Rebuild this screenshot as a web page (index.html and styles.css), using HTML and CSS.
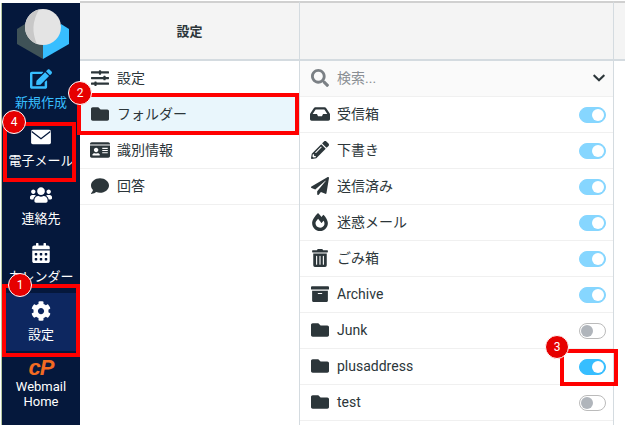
FILE: index.html
```html
<!DOCTYPE html>
<html lang="ja">
<head>
<meta charset="utf-8">
<title>設定</title>
<link rel="stylesheet" href="styles.css">
</head>
<body>
<svg class="sprite" aria-hidden="true">
  <symbol id="i-folder" viewBox="0 0 512 512"><path d="M464 128H272l-64-64H48C21.49 64 0 85.49 0 112v288c0 26.51 21.49 48 48 48h416c26.51 0 48-21.49 48-48V176c0-26.51-21.49-48-48-48z"/></symbol>
  <symbol id="i-cog" viewBox="0 0 512 512"><path d="M487.4 315.7l-42.6-24.6c4.3-23.2 4.3-47 0-70.2l42.6-24.6c4.9-2.8 7.1-8.6 5.5-14-11.1-35.6-30-67.8-54.7-94.6-3.8-4.1-10-5.1-14.8-2.3L380.8 110c-17.9-15.4-38.5-27.3-60.8-35.1V25.8c0-5.6-3.9-10.5-9.4-11.7-36.7-8.2-74.3-7.8-109.2 0-5.5 1.2-9.4 6.1-9.4 11.7V75c-22.2 7.9-42.8 19.8-60.8 35.1L88.7 85.5c-4.9-2.8-11-1.9-14.8 2.3-24.7 26.7-43.6 58.9-54.7 94.6-1.7 5.4.6 11.2 5.5 14L67.3 221c-4.3 23.2-4.3 47 0 70.2l-42.6 24.6c-4.9 2.8-7.1 8.6-5.5 14 11.1 35.6 30 67.8 54.7 94.6 3.8 4.1 10 5.1 14.8 2.3l42.6-24.6c17.9 15.4 38.5 27.3 60.8 35.1v49.2c0 5.6 3.9 10.5 9.4 11.7 36.7 8.2 74.3 7.8 109.2 0 5.5-1.2 9.4-6.1 9.4-11.7v-49.2c22.2-7.9 42.8-19.8 60.8-35.1l42.6 24.6c4.9 2.8 11 1.9 14.8-2.3 24.7-26.7 43.6-58.9 54.7-94.6 1.5-5.5-.7-11.3-5.6-14.1zM256 336c-44.1 0-80-35.9-80-80s35.9-80 80-80 80 35.9 80 80-35.9 80-80 80z"/></symbol>
</svg>

<div class="app">
  <nav class="sidebar">
    <div class="logo">
      <svg viewBox="0 0 52 52" width="52" height="52">
        <path class="logo-left" d="M0 21 L8 16 L26 35 L26 51 L0 36 Z"/>
        <path class="logo-right" d="M52 21 L44 16 L26 35 L26 51 L52 36 Z"/>
        <circle class="logo-ball" cx="26" cy="19" r="18"/>
        <path class="logo-shade" d="M22 1.5 A18 18 0 0 0 20 36 Q12 19 22 1.5 Z"/>
      </svg>
    </div>
    <a class="nav-item nav-compose">
      <svg class="nav-icon" viewBox="0 0 576 512"><path d="M402.6 83.2l90.2 90.2c3.8 3.8 3.8 10 0 13.8L274.4 405.6l-92.8 10.3c-12.4 1.4-22.9-9.1-21.5-21.5l10.3-92.8L388.8 83.2c3.8-3.8 10-3.8 13.8 0zm162-22.9l-48.8-48.8c-15.2-15.2-39.9-15.2-55.2 0l-35.4 35.4c-3.8 3.8-3.8 10 0 13.8l90.2 90.2c3.8 3.8 10 3.8 13.8 0l35.4-35.4c15.2-15.3 15.2-40 0-55.2zM384 346.2V448H64V128h229.8c3.2 0 6.2-1.3 8.5-3.5l40-40c7.6-7.6 2.2-20.5-8.5-20.5H48C21.5 64 0 85.5 0 112v352c0 26.5 21.5 48 48 48h352c26.5 0 48-21.5 48-48V306.2c0-10.7-12.9-16-20.5-8.5l-40 40c-2.2 2.3-3.5 5.3-3.5 8.5z"/></svg>
      <span>新規作成</span>
    </a>
    <a class="nav-item">
      <svg class="nav-icon" viewBox="0 0 20 16"><rect class="env-body" x="1" y="1.5" width="18" height="13" rx="1.5"/><path class="env-line" d="M1.5 3 L10 9.5 L18.5 3"/></svg>
      <span>電子メール</span>
    </a>
    <a class="nav-item">
      <svg class="nav-icon" viewBox="0 0 640 512"><path d="M96 224c35.3 0 64-28.7 64-64s-28.7-64-64-64-64 28.7-64 64 28.7 64 64 64zm448 0c35.3 0 64-28.7 64-64s-28.7-64-64-64-64 28.7-64 64 28.7 64 64 64zm32 32h-64c-17.6 0-33.5 7.1-45.1 18.6 40.3 22.1 68.9 62 75.1 109.4h66c17.7 0 32-14.3 32-32v-32c0-35.3-28.7-64-64-64zm-256 0c61.9 0 112-50.1 112-112S381.9 32 320 32 208 82.1 208 144s50.1 112 112 112zm76.8 32h-8.3c-20.8 10-43.9 16-68.5 16s-47.6-6-68.5-16h-8.3C179.6 288 128 339.6 128 403.2V432c0 26.5 21.5 48 48 48h288c26.5 0 48-21.5 48-48v-28.8c0-63.6-51.6-115.2-115.2-115.2zm-223.7-13.4C161.5 263.1 145.6 256 128 256H64c-35.3 0-64 28.7-64 64v32c0 17.7 14.3 32 32 32h65.9c6.3-47.4 34.9-87.3 75.2-109.4z"/></svg>
      <span>連絡先</span>
    </a>
    <a class="nav-item">
      <svg class="nav-icon" viewBox="0 0 448 512"><path d="M0 464c0 26.5 21.5 48 48 48h352c26.5 0 48-21.5 48-48V192H0v272zm320-196c0-6.6 5.4-12 12-12h40c6.6 0 12 5.4 12 12v40c0 6.6-5.4 12-12 12h-40c-6.6 0-12-5.4-12-12v-40zm0 128c0-6.6 5.4-12 12-12h40c6.6 0 12 5.4 12 12v40c0 6.6-5.4 12-12 12h-40c-6.6 0-12-5.4-12-12v-40zM192 268c0-6.6 5.4-12 12-12h40c6.6 0 12 5.4 12 12v40c0 6.6-5.4 12-12 12h-40c-6.6 0-12-5.4-12-12v-40zm0 128c0-6.6 5.4-12 12-12h40c6.6 0 12 5.4 12 12v40c0 6.6-5.4 12-12 12h-40c-6.6 0-12-5.4-12-12v-40zM64 268c0-6.6 5.4-12 12-12h40c6.6 0 12 5.4 12 12v40c0 6.6-5.4 12-12 12H76c-6.6 0-12-5.4-12-12v-40zm0 128c0-6.6 5.4-12 12-12h40c6.6 0 12 5.4 12 12v40c0 6.6-5.4 12-12 12H76c-6.6 0-12-5.4-12-12v-40zM400 64h-48V16c0-8.8-7.2-16-16-16h-32c-8.8 0-16 7.2-16 16v48H160V16c0-8.8-7.2-16-16-16h-32c-8.8 0-16 7.2-16 16v48H48C21.5 64 0 85.5 0 112v48h448v-48c0-26.5-21.5-48-48-48z"/></svg>
      <span>カレンダー</span>
    </a>
    <a class="nav-item nav-active">
      <svg class="nav-icon"><use href="#i-cog"/></svg>
      <span>設定</span>
    </a>
    <a class="nav-item nav-cpanel">
      <span class="cp-logo">cP</span>
      <span>Webmail<br>Home</span>
    </a>
  </nav>

  <section class="col col-menu">
    <header class="col-head">設定</header>
    <ul class="rows">
      <li class="row">
        <svg class="ico" viewBox="0 0 512 512"><path d="M496 384H160v-16c0-8.8-7.2-16-16-16h-32c-8.8 0-16 7.2-16 16v16H16c-8.8 0-16 7.2-16 16v32c0 8.8 7.2 16 16 16h80v16c0 8.8 7.2 16 16 16h32c8.8 0 16-7.2 16-16v-16h336c8.8 0 16-7.2 16-16v-32c0-8.8-7.2-16-16-16zm0-160h-80v-16c0-8.8-7.2-16-16-16h-32c-8.8 0-16 7.2-16 16v16H16c-8.8 0-16 7.2-16 16v32c0 8.8 7.2 16 16 16h336v16c0 8.8 7.2 16 16 16h32c8.8 0 16-7.2 16-16v-16h80c8.8 0 16-7.2 16-16v-32c0-8.8-7.2-16-16-16zm0-160H288V48c0-8.8-7.2-16-16-16h-32c-8.8 0-16 7.2-16 16v16H16C7.2 64 0 71.2 0 80v32c0 8.8 7.2 16 16 16h208v16c0 8.8 7.2 16 16 16h32c8.8 0 16-7.2 16-16v-16h208c8.8 0 16-7.2 16-16V80c0-8.8-7.2-16-16-16z"/></svg>
        <span class="ja">設定</span>
      </li>
      <li class="row row-selected">
        <svg class="ico"><use href="#i-folder"/></svg>
        <span class="ja">フォルダー</span>
      </li>
      <li class="row">
        <svg class="ico" viewBox="0 0 576 512"><path d="M528 32H48C21.5 32 0 53.5 0 80v16h576V80c0-26.5-21.5-48-48-48zM0 432c0 26.5 21.5 48 48 48h480c26.5 0 48-21.5 48-48V128H0v304zm352-232c0-4.4 3.6-8 8-8h144c4.4 0 8 3.6 8 8v16c0 4.4-3.6 8-8 8H360c-4.4 0-8-3.6-8-8v-16zm0 64c0-4.4 3.6-8 8-8h144c4.4 0 8 3.6 8 8v16c0 4.4-3.6 8-8 8H360c-4.4 0-8-3.6-8-8v-16zm0 64c0-4.4 3.6-8 8-8h144c4.4 0 8 3.6 8 8v16c0 4.4-3.6 8-8 8H360c-4.4 0-8-3.6-8-8v-16zM176 192c35.3 0 64 28.7 64 64s-28.7 64-64 64-64-28.7-64-64 28.7-64 64-64zM67.1 396.2C75.5 370.5 99.6 352 128 352h8.2c12.3 5.1 25.7 8 39.8 8s27.6-2.9 39.8-8h8.2c28.4 0 52.5 18.5 60.9 44.2 3.2 9.9-5.2 19.8-15.6 19.8H82.7c-10.4 0-18.8-10-15.6-19.8z"/></svg>
        <span class="ja">識別情報</span>
      </li>
      <li class="row">
        <svg class="ico" viewBox="0 0 512 512"><path d="M256 32C114.6 32 0 125.1 0 240c0 49.6 21.4 95 57 130.7C44.5 421.1 2.7 466 2.2 466.5c-2.2 2.3-2.8 5.7-1.5 8.7S4.8 480 8 480c66.3 0 116-31.8 140.6-51.4 32.7 12.3 69 19.4 107.4 19.4 141.4 0 256-93.1 256-208S397.4 32 256 32z"/></svg>
        <span class="ja">回答</span>
      </li>
    </ul>
  </section>

  <section class="col col-folders">
    <header class="col-head"></header>
    <div class="row search-row">
      <svg class="ico ico-search" viewBox="0 0 512 512"><path d="M505 442.7L405.3 343c-4.5-4.5-10.6-7-17-7H372c27.6-35.3 44-79.7 44-128C416 93.1 322.9 0 208 0S0 93.1 0 208s93.1 208 208 208c48.3 0 92.7-16.4 128-44v16.3c0 6.4 2.5 12.5 7 17l99.7 99.7c9.4 9.4 24.6 9.4 33.9 0l28.3-28.3c9.4-9.4 9.4-24.6.1-34zM208 336c-70.7 0-128-57.2-128-128 0-70.7 57.2-128 128-128 70.7 0 128 57.2 128 128 0 70.7-57.2 128-128 128z"/></svg>
      <span class="search-text ja">検索...</span>
      <svg class="chevron" viewBox="0 0 448 512"><path d="M207.029 381.476L12.686 187.132c-9.373-9.373-9.373-24.569 0-33.941l22.667-22.667c9.357-9.357 24.522-9.375 33.901-.04L224 284.505l154.745-154.021c9.379-9.335 24.544-9.317 33.901.04l22.667 22.667c9.373 9.373 9.373 24.569 0 33.941L240.971 381.476c-9.373 9.372-24.569 9.372-33.942 0z"/></svg>
    </div>
    <ul class="rows">
      <li class="row">
        <svg class="ico" viewBox="0 0 576 512"><path d="M567.938 243.908L462.25 85.374A48.003 48.003 0 0 0 422.311 64H153.689a48 48 0 0 0-39.938 21.374L8.062 243.908A47.994 47.994 0 0 0 0 270.533V400c0 26.51 21.49 48 48 48h480c26.51 0 48-21.49 48-48V270.533a47.994 47.994 0 0 0-8.062-26.625zM162.252 128h251.497l85.333 128H376l-32 64H232l-32-64H76.918l85.334-128z"/></svg>
        <span class="grow ja">受信箱</span><i class="toggle toggle-faded"></i>
      </li>
      <li class="row">
        <svg class="ico" viewBox="0 0 512 512"><path d="M497.9 142.1l-46.1 46.1c-4.7 4.7-12.3 4.7-17 0l-111-111c-4.7-4.7-4.7-12.3 0-17l46.1-46.1c18.7-18.7 49.1-18.7 67.9 0l60.1 60.1c18.8 18.7 18.8 49.1 0 67.9zM284.2 99.8L21.6 362.4.4 483.9c-2.9 16.4 11.4 30.6 27.8 27.8l121.5-21.3 262.6-262.6c4.7-4.7 4.7-12.3 0-17l-111-111c-4.8-4.7-12.4-4.7-17.1 0zM124.1 339.9c-5.5-5.5-5.5-14.3 0-19.8l154-154c5.5-5.5 14.3-5.5 19.8 0s5.5 14.3 0 19.8l-154 154c-5.5 5.5-14.3 5.5-19.8 0zM88 424h48v36.3l-64.5 11.3-31.1-31.1L51.7 376H88v48z"/></svg>
        <span class="grow ja">下書き</span><i class="toggle toggle-faded"></i>
      </li>
      <li class="row">
        <svg class="ico" viewBox="0 0 512 512"><path d="M476 3.2L12.5 270.6c-18.1 10.4-15.8 35.6 2.2 43.2L121 358.4l287.3-253.2c5.5-4.9 13.3 2.6 8.6 8.3L176 407v80.5c0 23.6 28.5 32.9 42.5 15.8L282 426l124.6 52.2c14.2 6 30.4-2.9 33-18.2l72-432C515 7.8 493.3-6.8 476 3.2z"/></svg>
        <span class="grow ja">送信済み</span><i class="toggle toggle-faded"></i>
      </li>
      <li class="row">
        <svg class="ico" viewBox="0 0 448 512"><path d="M323.56 51.2c-20.8 19.3-39.58 39.59-56.22 59.97C240.08 73.62 206.28 35.53 168 0 69.74 91.17 0 209.96 0 281.6 0 408.85 100.29 512 224 512s224-103.15 224-230.4c0-53.27-51.98-163.14-124.44-230.4zm-19.47 340.65C282.43 407.01 255.72 416 226.86 416 154.71 416 96 368.26 96 290.75c0-38.61 24.31-72.63 72.79-130.75 6.93 7.98 98.83 125.34 98.83 125.34l58.63-66.88c4.14 6.85 7.91 13.55 11.27 19.97 27.35 52.19 15.81 118.97-33.43 153.42z"/></svg>
        <span class="grow ja">迷惑メール</span><i class="toggle toggle-faded"></i>
      </li>
      <li class="row">
        <svg class="ico" viewBox="0 0 448 512"><path d="M32 464a48 48 0 0 0 48 48h288a48 48 0 0 0 48-48V128H32zm272-256a16 16 0 0 1 32 0v224a16 16 0 0 1-32 0zm-96 0a16 16 0 0 1 32 0v224a16 16 0 0 1-32 0zm-96 0a16 16 0 0 1 32 0v224a16 16 0 0 1-32 0zM432 32H312l-9.4-18.7A24 24 0 0 0 281.1 0H166.8a23.72 23.72 0 0 0-21.4 13.3L136 32H16A16 16 0 0 0 0 48v32a16 16 0 0 0 16 16h416a16 16 0 0 0 16-16V48a16 16 0 0 0-16-16z"/></svg>
        <span class="grow ja">ごみ箱</span><i class="toggle toggle-faded"></i>
      </li>
      <li class="row">
        <svg class="ico" viewBox="0 0 512 512"><path d="M32 448c0 17.7 14.3 32 32 32h384c17.7 0 32-14.3 32-32V160H32v288zm160-212c0-6.6 5.4-12 12-12h104c6.6 0 12 5.4 12 12v8c0 6.6-5.4 12-12 12H204c-6.6 0-12-5.4-12-12v-8zM480 32H32C14.3 32 0 46.3 0 64v48c0 8.8 7.2 16 16 16h480c8.8 0 16-7.2 16-16V64c0-17.7-14.3-32-32-32z"/></svg>
        <span class="grow">Archive</span><i class="toggle toggle-faded"></i>
      </li>
      <li class="row">
        <svg class="ico"><use href="#i-folder"/></svg>
        <span class="grow">Junk</span><i class="toggle toggle-off"></i>
      </li>
      <li class="row">
        <svg class="ico"><use href="#i-folder"/></svg>
        <span class="grow">plusaddress</span><i class="toggle toggle-on"></i>
      </li>
      <li class="row">
        <svg class="ico"><use href="#i-folder"/></svg>
        <span class="grow">test</span><i class="toggle toggle-off"></i>
      </li>
    </ul>
  </section>

  <section class="col col-rest">
    <header class="col-head"></header>
  </section>

  <div class="mark mark-settings"></div>
  <div class="mark mark-mail"></div>
  <div class="mark mark-folder"></div>
  <div class="mark mark-toggle"></div>
  <b class="badge badge-1">1</b>
  <b class="badge badge-2">2</b>
  <b class="badge badge-3">3</b>
  <b class="badge badge-4">4</b>
</div>
</body>
</html>
```
FILE: styles.css
```css
* { box-sizing: border-box; }
html, body { margin: 0; height: 100%; overflow: hidden; background: #fff; }
body { font-family: Roboto, "Noto Sans CJK JP", sans-serif; color: #2c363a; }
.sprite { display: none; }
ul { list-style: none; margin: 0; padding: 0; }

.app { position: relative; display: flex; width: 625px; height: 425px; overflow: hidden; }

.sidebar {
  width: 79px; margin: 3px 0 0 1px; flex: none;
  background: #05183c; border-left: 1px solid #b5c7a0;
  color: #fff; display: flex; flex-direction: column; align-items: stretch;
}
.logo { height: 58px; display: flex; padding: 5px 0 0 15px; }
.logo-left { fill: #3f5257; }
.logo-right { fill: #37beff; }
.logo-ball { fill: #e4e4e4; }
.logo-shade { fill: #c8c8c8; }

.nav-item {
  height: 58px; flex: none; display: flex; flex-direction: column; align-items: center;
  padding-top: 8px; font-size: 13px; line-height: 18px; text-align: center;
}
.nav-icon { width: 22px; height: 20px; fill: #fff; margin-bottom: 5px; flex: none; }
.nav-compose { color: #37beff; }
.nav-compose .nav-icon { fill: #37beff; }
.env-body { fill: #fff; }
.env-line { fill: none; stroke: #05183c; stroke-width: 1.2; }
.nav-active { background: #0d2760; }
.nav-cpanel { padding-top: 7px; line-height: 15px; font-size: 13px; }
.cp-logo {
  font-family: "Liberation Sans", sans-serif; font-weight: 700; font-style: italic;
  font-size: 22px; line-height: 20px; letter-spacing: -1px; color: #f26a22; margin-bottom: 1px;
}

.col { display: flex; flex-direction: column; border-top: 2px solid #d0d0d0; margin-top: 1px; }
.col-menu { width: 220px; flex: none; border-right: 1px solid #d4dbe0; }
.col-folders { width: 314px; flex: none; border-right: 1px solid #d4dbe0; }
.col-rest { flex: 1; }
.col-head {
  height: 58px; flex: none; background: #f4f4f4; border-bottom: 2px solid #d4dbe0;
  display: flex; align-items: center; justify-content: center;
  padding-bottom: 2px; font-size: 13px; font-weight: 700;
}

.row {
  height: 36px; display: flex; align-items: center; gap: 7px;
  padding: 0 7px 2px 10px; font-size: 14px; border-bottom: 1px solid #f0f0f0;
}
.ja { margin-bottom: 2px; }
.row-selected { background: #e9f6fc; }
.grow { flex: 1; }
.ico { width: 20px; height: 18px; fill: #2c363a; flex: none; }
.search-row { background: #fafafa; padding-right: 8px; }
.ico-search { fill: #7b8085; }
.search-text { flex: 1; color: #8a8f94; }
.chevron { width: 12px; height: 14px; fill: #2c363a; }

.toggle {
  position: relative; display: block; width: 27px; height: 16px; border-radius: 8px;
  border: 1px solid #bbb; background: #fff; margin-top: 2px;
}
.toggle::after {
  content: ""; position: absolute; top: 1px; left: 1px;
  width: 12px; height: 12px; border-radius: 50%; background: #b0b5bb;
}
.toggle-faded { background: #86d6ff; border-color: #86d6ff; }
.toggle-on { background: #37beff; border-color: #37beff; }
.toggle-faded::after, .toggle-on::after { left: 12px; background: #fff; }

.mark { position: absolute; border: 4px solid #f00; }
.mark-settings { left: 2px; top: 284px; width: 78px; height: 73px; }
.mark-mail { left: 3px; top: 122px; width: 73px; height: 60px; }
.mark-folder { left: 77px; top: 93px; width: 222px; height: 42px; }
.mark-toggle { left: 560px; top: 349px; width: 58px; height: 37px; }

.badge {
  position: absolute; width: 24px; height: 24px; border-radius: 50%;
  background: #e60000; border: 1px solid #fff; color: #fff;
  display: flex; align-items: center; justify-content: center;
  font-size: 12px; font-weight: 400;
}
.badge-1 { left: 8px; top: 273px; }
.badge-2 { left: 68px; top: 81px; }
.badge-3 { left: 545px; top: 335px; }
.badge-4 { left: 2px; top: 110px; }
```
